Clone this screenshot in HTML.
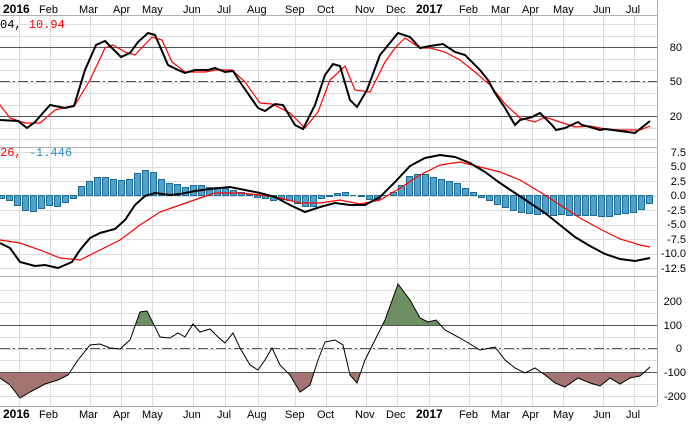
<!DOCTYPE html>
<html><head><meta charset="utf-8"><style>
html,body{margin:0;padding:0;background:#fff;}
svg{display:block;font-family:"Liberation Sans",sans-serif;}
</style></head><body>
<svg id="s" width="691" height="424" viewBox="0 0 691 424" xmlns="http://www.w3.org/2000/svg">
<rect width="691" height="424" fill="#fff"/>
<g id="grid" stroke="#dcdcdc" stroke-width="1"></g>
<g stroke="#b0b0b0" stroke-width="1" fill="none">
<line x1="0" y1="15.5" x2="657" y2="15.5"/>
<line x1="0" y1="147.5" x2="657" y2="147.5"/>
<line x1="0" y1="276.5" x2="657" y2="276.5"/>
<line x1="0" y1="406.5" x2="657" y2="406.5"/>
<line x1="657.5" y1="0" x2="657.5" y2="406"/>
</g>
<g stroke="#555" stroke-width="1">
<line x1="0" y1="47.5" x2="657" y2="47.5"/>
<line x1="0" y1="81.5" x2="657" y2="81.5" stroke-dasharray="10,3,2,3"/>
<line x1="0" y1="116.5" x2="657" y2="116.5"/>
<line x1="0" y1="325.5" x2="657" y2="325.5"/>
<line x1="0" y1="348.5" x2="657" y2="348.5" stroke-dasharray="10,3,2,3"/>
<line x1="0" y1="372.5" x2="657" y2="372.5"/>
</g>
<polyline fill="none" stroke="#f00" stroke-width="1.2" points="0,105 10,118 25,123 40,123 55,110 75,105 90,80 105,48 113,45 125,52 135,55 152,37 162,40 172,62 185,72 205,72 215,70 232,70 245,82 260,103 272,104 290,113 305,128 318,112 330,80 345,66 355,90 370,92 385,62 395,48 405,38 420,48 430,48 445,52 460,60 475,72 490,85 505,104 520,118 535,122 545,117 560,122 575,127 590,126 605,129 620,130 640,130 650,126"/>
<polyline fill="none" stroke="#000" stroke-width="2" points="0,120 18,121 27,128 35,122 50,105 65,108 74,106 85,70 96,45 105,41 121,57 130,53 138,42 148,33 155,35 168,65 178,70 185,73 195,70 208,70 215,68 225,72 233,71 242,85 258,108 265,111 275,104 283,105 295,125 303,129 315,105 325,75 333,64 340,66 350,100 357,107 367,90 380,55 398,33 410,37 420,48 430,46 443,44 455,52 465,55 480,70 488,80 495,93 505,108 515,125 520,120 532,117 540,113 552,125 556,130 565,128 578,122 582,125 590,127 600,130 605,129 620,131 635,133 650,121"/>
<g id="bars" fill="#4fa3cc" stroke="#1f6a8f" stroke-width="1"></g>
<polyline fill="none" stroke="#f00" stroke-width="1.2" points="0,240 20,243 40,250 60,258 80,260 100,250 120,240 140,225 160,212 180,205 200,198 215,193 240,193 260,195 280,198 300,203 320,203 340,200 360,204 380,200 400,188 420,175 440,165 460,162 480,167 500,172 520,180 540,192 560,205 580,218 600,229 620,239 640,245 650,247"/>
<polyline fill="none" stroke="#000" stroke-width="2" points="0,243 10,248 20,262 35,266 45,265 58,268 72,262 80,250 90,238 100,233 115,229 125,220 135,205 145,196 155,193 170,195 180,194 195,191 210,189 230,187 245,190 260,193 275,197 290,205 305,212 320,207 335,203 350,205 365,205 380,197 395,182 410,166 425,158 440,155 455,157 470,163 485,172 500,183 515,193 530,203 545,213 560,225 575,237 590,246 605,254 620,259 635,261 650,258"/>
<defs>
<clipPath id="up"><rect x="0" y="276" width="657" height="49.5"/></clipPath>
<clipPath id="dn"><rect x="0" y="372.5" width="657" height="34"/></clipPath>
</defs>
<g id="cci"></g>
<g font-size="11" fill="#000">
<text x="3" y="13" font-weight="bold" font-size="12">2016</text>
<text x="39" y="13">Feb</text><text x="79" y="13">Mar</text><text x="113" y="13">Apr</text><text x="142" y="13">May</text><text x="183" y="13">Jun</text><text x="217" y="13">Jul</text><text x="247" y="13">Aug</text><text x="285" y="13">Sep</text><text x="317" y="13">Oct</text><text x="355" y="13">Nov</text><text x="386" y="13">Dec</text>
<text x="416" y="13" font-weight="bold" font-size="12">2017</text>
<text x="459" y="13">Feb</text><text x="491" y="13">Mar</text><text x="522" y="13">Apr</text><text x="553" y="13">May</text><text x="593" y="13">Jun</text><text x="626" y="13">Jul</text>
<text x="3" y="418" font-weight="bold" font-size="12">2016</text>
<text x="39" y="418">Feb</text><text x="79" y="418">Mar</text><text x="113" y="418">Apr</text><text x="142" y="418">May</text><text x="183" y="418">Jun</text><text x="217" y="418">Jul</text><text x="247" y="418">Aug</text><text x="285" y="418">Sep</text><text x="317" y="418">Oct</text><text x="355" y="418">Nov</text><text x="386" y="418">Dec</text>
<text x="416" y="418" font-weight="bold" font-size="12">2017</text>
<text x="459" y="418">Feb</text><text x="491" y="418">Mar</text><text x="522" y="418">Apr</text><text x="553" y="418">May</text><text x="593" y="418">Jun</text><text x="626" y="418">Jul</text>
<text x="0" y="28" font-family="Liberation Mono, monospace" font-size="12">04, <tspan fill="#f00">10.94</tspan></text>
<text x="0" y="156" font-family="Liberation Mono, monospace" font-size="12"><tspan fill="#f00">26,</tspan> <tspan fill="#2a8fc4">-1.446</tspan></text>
</g>
<g font-size="11" fill="#000" text-anchor="end">
<text x="682" y="51">80</text><text x="682" y="85">50</text><text x="682" y="120">20</text>
<text x="686" y="156">7.5</text><text x="686" y="170">5.0</text><text x="686" y="185">2.5</text><text x="686" y="199">0.0</text><text x="686" y="214">-2.5</text><text x="686" y="228">-5.0</text><text x="686" y="243">-7.5</text><text x="686" y="257">-10.0</text><text x="686" y="272">-12.5</text>
<text x="682" y="305">200</text><text x="682" y="329">100</text><text x="682" y="352">0</text><text x="686" y="376">-100</text><text x="686" y="400">-200</text>
</g>
</svg>
<script>
var NS="http://www.w3.org/2000/svg";
function el(p,t,a){var e=document.createElementNS(NS,t);for(var k in a)e.setAttribute(k,a[k]);p.appendChild(e);return e;}
var g=document.getElementById('grid');
[19,50,90,121,152,193,225,258,295,326,366,397,429,469,501,532,563,603,634].forEach(function(x){el(g,'line',{x1:x+.5,y1:16,x2:x+.5,y2:406});});
for(var v=0;v<=100;v+=10){var y=Math.round(139-v*1.15)+.5;if(y>16&&y<147)el(g,'line',{x1:0,y1:y,x2:657,y2:y});}
for(var v=-12.5;v<=7.5;v+=2.5){var y=Math.round(195.5-v*5.8)+.5;el(g,'line',{x1:0,y1:y,x2:657,y2:y});}
for(var v=-200;v<=250;v+=50){var y=Math.round(348.5-v*0.235)+.5;if(y>277&&y<406)el(g,'line',{x1:0,y1:y,x2:657,y2:y});}
var h=[-3,-5,-10,-15,-16,-13,-10,-11,-7,-3,9,14,18,18,16,15,16,22,25,23,16,12,11,8,10,10,8,8,7,5,3,1,-2,-3,-5,-4,-5,-8,-11,-11,-3,-1,2,3,0,-1,-4,-4,0,3,10,19,21,21,18,16,14,12,7,3,-2,-5,-9,-12,-15,-17,-18,-19,-18,-20,-19,-20,-20,-20,-20,-21,-21,-19,-18,-17,-14,-8];
var b=document.getElementById('bars');var z=195.5;
h.forEach(function(v,i){var x=i*8-2;if(v==0){el(b,'line',{x1:x,y1:z,x2:x+6,y2:z,stroke:'#1f6a8f'});return;}
el(b,'rect',{x:x+.5,y:v>0?z-v:z,width:6,height:Math.abs(v)});});
var pts="0,378 10,385 20,398 30,392 45,384 58,380 68,375 78,360 90,345 100,344 110,348 120,349 130,340 140,312 147,311 160,337 170,338 178,333 185,337 193,324 200,332 210,329 218,337 225,343 233,333 240,348 250,365 258,370 265,360 272,348 280,365 290,375 300,392 310,385 318,360 325,342 335,340 343,345 350,375 357,383 365,360 375,340 385,320 398,284 410,300 420,318 428,322 436,320 445,330 460,338 470,344 480,350 495,347 505,360 515,368 525,373 535,368 545,375 555,383 565,387 578,378 590,383 600,386 610,378 620,384 630,378 640,376 650,367";
var c=document.getElementById('cci');
el(c,'polygon',{points:"0,325.5 "+pts+" 650,325.5",fill:"#6e8f64","clip-path":"url(#up)"});
el(c,'polygon',{points:"0,372.5 "+pts+" 650,372.5",fill:"#a37472","clip-path":"url(#dn)"});
el(c,'line',{x1:0,y1:325.5,x2:657,y2:325.5,stroke:'#555'});
el(c,'line',{x1:0,y1:372.5,x2:657,y2:372.5,stroke:'#555'});
el(c,'polyline',{points:pts,fill:'none',stroke:'#000','stroke-width':1});
</script>
</body></html>
